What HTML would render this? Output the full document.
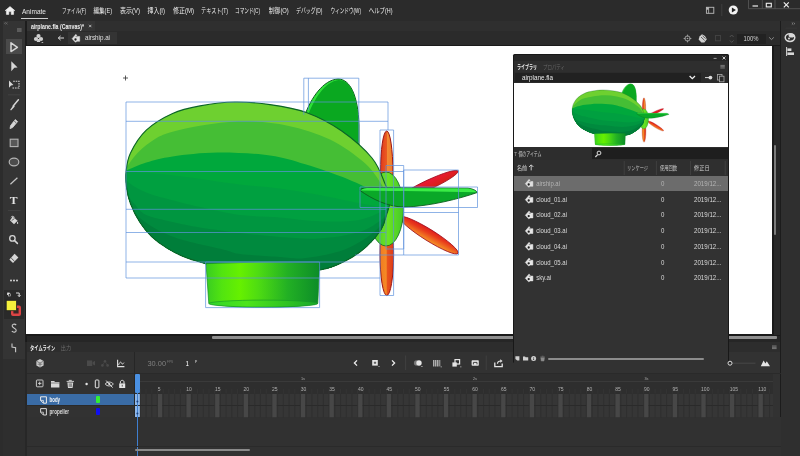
<!DOCTYPE html>
<html lang="ja"><head><meta charset="utf-8"><title>Animate</title>
<style>
html,body{margin:0;padding:0;background:#2c2c2c;overflow:hidden}
body{width:800px;height:456px;position:relative;font-family:"Liberation Sans",sans-serif}
.r{position:absolute}
</style></head><body>
<div class="r" style="left:0px;top:0px;width:800px;height:20.5px;background:#2b2b2b;"></div>
<div class="r" style="left:0px;top:20.5px;width:3px;height:436px;background:#2c2c2c;"></div>
<div class="r" style="left:3px;top:20.5px;width:21.5px;height:338.5px;background:#343434;"></div>
<div class="r" style="left:3px;top:359px;width:21.5px;height:97px;background:#2e2e2e;"></div>
<div class="r" style="left:24.5px;top:20.5px;width:2.5px;height:321px;background:#1d1d1d;"></div>
<div class="r" style="left:24.5px;top:341.5px;width:2.5px;height:115px;background:#272727;"></div>
<div class="r" style="left:27px;top:20.5px;width:753.5px;height:10.5px;background:#2f2f2f;"></div>
<div class="r" style="left:27px;top:21px;width:68px;height:10px;background:#353535;"></div>
<div class="r" style="left:27px;top:31px;width:753.5px;height:14px;background:#2b2b2b;"></div>
<div class="r" style="left:68px;top:32px;width:49px;height:11.5px;background:#343434;"></div>
<div class="r" style="left:25.5px;top:44.5px;width:755px;height:297.5px;background:#1a1a1a;"></div>
<div class="r" style="left:26.3px;top:45.8px;width:745.7px;height:288px;background:#ffffff;"></div>
<div class="r" style="left:773.6px;top:46px;width:6.9px;height:288.5px;background:#282828;"></div>
<div class="r" style="left:774px;top:144.5px;width:2.3px;height:90.8px;background:#7c7c7c;border-radius:1px"></div>
<div class="r" style="left:26.5px;top:335.5px;width:754px;height:6px;background:#262626;"></div>
<div class="r" style="left:212.2px;top:336.3px;width:565px;height:2.4px;background:#8e8e8e;border-radius:1px"></div>
<div class="r" style="left:27px;top:342px;width:753.5px;height:9.5px;background:#2d2d2d;"></div>
<div class="r" style="left:27px;top:351.5px;width:753.5px;height:104.5px;background:#323232;"></div>
<div class="r" style="left:780.5px;top:20.5px;width:19.5px;height:436px;background:#2f2f2f;"></div>
<div class="r" style="left:780px;top:20.5px;width:0.8px;height:436px;background:#1c1c1c;"></div>
<div class="r" style="left:21px;top:17.8px;width:26.5px;height:1.2px;background:#cfcfcf;"></div>
<div class="r" style="left:737px;top:34px;width:29px;height:9.6px;background:#222222;"></div>
<div class="r" style="left:6px;top:39.4px;width:15.6px;height:14.6px;background:#4a4a4a;"></div>
<div class="r" style="left:4px;top:289.5px;width:19.5px;height:29px;background:#2a2a2a;"></div>
<div class="r" style="left:27px;top:373px;width:753.5px;height:0.8px;background:#2a2a2a;"></div>
<div class="r" style="left:134px;top:352px;width:0.9px;height:104px;background:#262626;"></div>
<div class="r" style="left:27px;top:393.8px;width:107px;height:11.2px;background:#3a6ca6;"></div>
<div class="r" style="left:27px;top:405px;width:107px;height:0.6px;background:#2a2a2a;"></div>
<div class="r" style="left:27px;top:417.4px;width:753.5px;height:38.6px;background:#313131;"></div>
<div class="r" style="left:96px;top:396px;width:3.6px;height:6.6px;background:#33ee33;border-radius:1px"></div>
<div class="r" style="left:96px;top:408.3px;width:3.6px;height:6.4px;background:#1010f0;border-radius:1px"></div>
<div class="r" style="left:134.6px;top:373.8px;width:638px;height:19.8px;background:#2e2e2e;"></div>
<div class="r" style="left:134.6px;top:381px;width:638px;height:0.6px;background:#3a3a3a;"></div>
<div class="r" style="left:134.6px;top:393.8px;width:638px;height:23.6px;background:#363636;"></div>
<div class="r" style="left:134.6px;top:405.3px;width:638px;height:0.7px;background:#2a2a2a;"></div>
<div class="r" style="left:134.6px;top:374.4px;width:5.4px;height:18.6px;background:#4a90e2;border-radius:1px"></div>
<div class="r" style="left:136.9px;top:393px;width:0.9px;height:63px;background:#4a90e2;"></div>
<div class="r" style="left:134.8px;top:394px;width:5.2px;height:11px;background:#8fb8ea;"></div>
<div class="r" style="left:134.8px;top:406px;width:5.2px;height:11.2px;background:#8fb8ea;"></div>
<div class="r" style="left:136.9px;top:393px;width:0.9px;height:63px;background:#3f7fd0;"></div>
<div class="r" style="left:27px;top:446px;width:753.5px;height:0.6px;background:#2a2a2a;"></div>
<div class="r" style="left:135px;top:449.3px;width:115px;height:2px;background:#8a8a8a;border-radius:1px"></div>
<div class="r" style="left:512.9px;top:54.3px;width:216.20000000000002px;height:309px;background:#181818;border-radius:1.5px"></div>
<div class="r" style="left:513.6px;top:54.8px;width:214.8px;height:6.6px;background:#272727;border-radius:1.5px 1.5px 0 0"></div>
<div class="r" style="left:513.6px;top:61.4px;width:214.8px;height:10.6px;background:#2e2e2e;"></div>
<div class="r" style="left:513.6px;top:72px;width:214.8px;height:11px;background:#2b2b2b;"></div>
<div class="r" style="left:515px;top:72.8px;width:186px;height:9.4px;background:#212121;"></div>
<div class="r" style="left:513.6px;top:82.5px;width:214.8px;height:64.3px;background:#ffffff;"></div>
<div class="r" style="left:513.6px;top:146.8px;width:214.8px;height:13.6px;background:#2d2d2d;"></div>
<div class="r" style="left:592.4px;top:148.4px;width:136px;height:10.6px;background:#1e1e1e;"></div>
<div class="r" style="left:513.6px;top:160.4px;width:214.8px;height:15.2px;background:#2f2f2f;"></div>
<div class="r" style="left:513.6px;top:175.6px;width:214.8px;height:187px;background:#323232;"></div>
<div class="r" style="left:513.6px;top:175.6px;width:214.8px;height:15.2px;background:#6c6c6c;"></div>
<div class="r" style="left:547.6px;top:357.5px;width:156px;height:2px;background:#8c8c8c;border-radius:1px"></div>
<svg width="800" height="456" viewBox="0 0 800 456" style="position:absolute;left:0;top:0;will-change:transform">
<defs>
<clipPath id="bodyclip"><path d="M126.0,172.0C126.7,166.2 127.1,159.9 130.5,152.9C133.9,145.9 139.3,136.7 146.3,130.1C153.3,123.5 163.7,117.4 172.6,113.4C181.5,109.4 189.6,107.8 200.0,105.9C210.4,104.0 223.3,102.2 235.0,102.0C246.7,101.8 258.1,102.9 270.0,104.6C281.9,106.3 294.4,108.1 306.3,112.4C318.2,116.8 330.4,123.1 341.4,130.7C352.3,138.3 364.7,149.1 372.0,158.0C379.3,166.9 382.3,177.4 385.3,184.4C388.3,191.4 389.8,194.9 390.0,200.0C390.2,205.1 388.1,209.8 386.6,214.7C385.2,219.6 384.6,223.9 381.3,229.2C378.0,234.5 372.7,241.0 366.8,246.3C360.9,251.6 353.6,256.9 345.8,260.8C338.0,264.8 332.6,267.9 320.0,270.0C307.4,272.1 285.8,273.7 270.0,273.5C254.2,273.3 235.8,270.6 225.0,269.0C214.2,267.4 212.0,265.6 205.5,263.7C199.0,261.8 192.2,260.2 185.8,257.6C179.5,255.1 173.1,251.9 167.4,248.4C161.7,244.9 156.2,241.0 151.6,236.6C147.0,232.2 143.2,227.5 139.7,222.0C136.2,216.5 132.7,209.4 130.5,203.7C128.3,198.0 127.3,193.2 126.6,187.9C125.8,182.6 125.3,177.8 126.0,172.0Z"/></clipPath>
<linearGradient id="gond" x1="0" x2="1" y1="0" y2="0">
 <stop offset="0" stop-color="#38cc22"/><stop offset="0.14" stop-color="#52e410"/><stop offset="0.3" stop-color="#66f000"/><stop offset="0.46" stop-color="#4edc12"/><stop offset="0.72" stop-color="#22b024"/><stop offset="1" stop-color="#0c8c28"/>
</linearGradient>
<linearGradient id="gondb" x1="0" x2="1" y1="0" y2="0">
 <stop offset="0" stop-color="#30d42a"/><stop offset="0.35" stop-color="#4ee41a"/><stop offset="1" stop-color="#18a82a"/>
</linearGradient>
<linearGradient id="prop" x1="0" x2="1" y1="0" y2="0">
 <stop offset="0" stop-color="#e03a1c"/><stop offset="0.5" stop-color="#ea5a22"/><stop offset="0.55" stop-color="#f28a32"/><stop offset="1" stop-color="#ee7a2a"/>
</linearGradient>
<linearGradient id="prop2" x1="0" x2="1" y1="0" y2="0">
 <stop offset="0" stop-color="#f07a20"/><stop offset="0.45" stop-color="#f58a26"/><stop offset="0.55" stop-color="#e8521c"/><stop offset="1" stop-color="#dc3a1a"/>
</linearGradient>
<linearGradient id="blade" x1="0" x2="0.25" y1="0" y2="1">
 <stop offset="0" stop-color="#ee1838"/><stop offset="1" stop-color="#d8201a"/>
</linearGradient>
<linearGradient id="blade2" x1="0" x2="0.3" y1="0" y2="1">
 <stop offset="0" stop-color="#dc141c"/><stop offset="0.45" stop-color="#e83a1c"/><stop offset="1" stop-color="#f48a26"/>
</linearGradient>
<linearGradient id="cap" x1="0" x2="1" y1="0" y2="0">
 <stop offset="0" stop-color="#3cc030"/><stop offset="0.55" stop-color="#6ae422"/><stop offset="1" stop-color="#44c828"/>
</linearGradient>
<g id="ship">
 <!-- propeller -->
 <ellipse cx="386.7" cy="172.5" rx="6.2" ry="41.5" fill="url(#prop)" stroke="#9a1414" stroke-width="1"/><ellipse cx="386.8" cy="254" rx="6.8" ry="41.5" fill="url(#prop2)" stroke="#9a1414" stroke-width="1"/>
 <!-- blades -->
 <g transform="translate(429 184.6) rotate(-25)"><ellipse cx="0" cy="0" rx="32" ry="4.7" fill="url(#blade)" stroke="#a01020" stroke-width="0.8"/></g>
 <g transform="translate(429 235.2) rotate(32)"><ellipse cx="0" cy="0" rx="34.2" ry="5.7" fill="url(#blade2)" stroke="#a01020" stroke-width="0.8"/></g>
 <!-- tail cap -->
 <ellipse cx="386" cy="209" rx="17.5" ry="37" fill="url(#cap)" stroke="#0b6a24" stroke-width="0.8"/>
 <!-- top fin -->
 <path d="M304.5,116 C311,98 323,80 338,79 C350,79 358,95 359,125 L359,148 L304.5,148 Z" fill="#2ee038" stroke="#0b5d1e" stroke-width="1"/>
 <path d="M307.6,116 C314,99 325,81.5 338.6,80 C350,80 357.6,95 358.4,125 L358.4,148 L307.6,148 Z" fill="#0aa820"/>
 <!-- body -->
 <path d="M126.0,172.0C126.7,166.2 127.1,159.9 130.5,152.9C133.9,145.9 139.3,136.7 146.3,130.1C153.3,123.5 163.7,117.4 172.6,113.4C181.5,109.4 189.6,107.8 200.0,105.9C210.4,104.0 223.3,102.2 235.0,102.0C246.7,101.8 258.1,102.9 270.0,104.6C281.9,106.3 294.4,108.1 306.3,112.4C318.2,116.8 330.4,123.1 341.4,130.7C352.3,138.3 364.7,149.1 372.0,158.0C379.3,166.9 382.3,177.4 385.3,184.4C388.3,191.4 389.8,194.9 390.0,200.0C390.2,205.1 388.1,209.8 386.6,214.7C385.2,219.6 384.6,223.9 381.3,229.2C378.0,234.5 372.7,241.0 366.8,246.3C360.9,251.6 353.6,256.9 345.8,260.8C338.0,264.8 332.6,267.9 320.0,270.0C307.4,272.1 285.8,273.7 270.0,273.5C254.2,273.3 235.8,270.6 225.0,269.0C214.2,267.4 212.0,265.6 205.5,263.7C199.0,261.8 192.2,260.2 185.8,257.6C179.5,255.1 173.1,251.9 167.4,248.4C161.7,244.9 156.2,241.0 151.6,236.6C147.0,232.2 143.2,227.5 139.7,222.0C136.2,216.5 132.7,209.4 130.5,203.7C128.3,198.0 127.3,193.2 126.6,187.9C125.8,182.6 125.3,177.8 126.0,172.0Z" fill="#6ed030"/>
 <g clip-path="url(#bodyclip)">
  <path d="M124.0,171.0C126.2,168.0 132.3,158.2 137.5,152.9C142.7,147.6 149.2,142.4 155.0,138.9C160.8,135.4 165.1,134.0 172.6,131.8C180.1,129.6 188.1,127.5 200.0,125.7C211.9,124.0 229.3,121.3 243.9,121.3C258.5,121.3 273.3,122.7 287.7,125.7C302.1,128.8 317.1,133.3 330.0,139.6C342.9,145.9 356.2,155.6 365.0,163.3C373.8,171.0 378.4,179.9 382.6,186.0C386.8,192.1 388.8,197.7 390.0,200.0L400,300L100,300Z" fill="#45be35"/>
  <path d="M124.0,171.5C127.7,170.0 138.2,165.0 146.3,162.5C154.4,160.0 160.7,158.1 172.6,156.4C184.5,154.7 201.3,152.7 217.5,152.5C233.7,152.3 255.4,153.5 270.0,155.5C284.6,157.5 292.4,160.4 305.3,164.3C318.2,168.2 335.4,174.1 347.5,179.0C359.6,183.9 370.9,190.0 378.0,194.0C385.1,198.0 388.0,201.5 390.0,203.0L400,300L100,300Z" fill="#00a83c"/>
  <path d="M124.0,171.5C132.1,172.1 153.3,173.1 172.6,175.3C191.9,177.5 222.1,182.3 240.0,184.5C257.9,186.7 266.8,186.7 280.0,188.4C293.2,190.2 306.3,192.6 319.5,195.0C332.7,197.4 348.1,201.0 359.0,203.0C369.9,205.0 379.8,206.7 385.0,207.0C390.2,207.3 389.2,205.3 390.0,205.0L400,300L100,300Z" fill="#00a040"/>
  <path d="M124.0,172.0C124.7,173.7 124.3,178.6 128.0,182.0C131.7,185.4 138.9,189.3 146.3,192.4C153.7,195.5 163.8,197.9 172.6,200.3C181.4,202.7 187.8,204.4 199.0,206.8C210.2,209.2 226.5,213.2 240.0,215.0C253.5,216.8 266.8,216.3 280.0,217.4C293.2,218.5 306.3,220.9 319.5,221.3C332.7,221.7 348.1,222.0 359.0,220.0C369.9,218.0 379.8,212.0 385.0,209.5C390.2,207.0 389.2,205.8 390.0,205.0L400,300L100,300Z" fill="#009640"/>
  <path d="M124.0,175.0C124.4,177.9 124.6,187.3 126.6,192.4C128.6,197.5 132.5,201.7 135.8,205.5C139.1,209.3 140.2,212.2 146.3,215.0C152.4,217.8 163.7,219.9 172.6,222.0C181.5,224.1 188.8,225.7 200.0,227.5C211.2,229.3 226.7,231.4 240.0,233.0C253.3,234.6 266.8,236.1 280.0,237.0C293.2,237.9 306.3,239.2 319.5,238.4C332.7,237.6 348.5,235.3 359.0,232.0C369.5,228.7 377.8,222.7 382.6,218.7C387.4,214.7 387.1,209.8 388.0,208.0L400,300L100,300Z" fill="#008a3e"/>
  <path d="M124.0,185.0C125.0,188.3 126.5,198.8 130.0,205.0C133.5,211.2 137.5,216.6 145.0,222.0C152.5,227.4 161.7,232.8 175.0,237.5C188.3,242.2 214.2,247.2 225.0,250.0C235.8,252.8 230.8,252.8 240.0,254.0C249.2,255.2 269.0,256.3 280.0,257.0C291.0,257.7 295.0,259.3 306.0,258.0C317.0,256.7 334.1,253.8 346.0,249.0C357.9,244.2 370.4,235.5 377.4,229.0C384.4,222.5 386.2,213.2 388.0,210.0L400,300L100,300Z" fill="#007e3a"/>
 </g>
 <path d="M126.0,172.0C126.7,166.2 127.1,159.9 130.5,152.9C133.9,145.9 139.3,136.7 146.3,130.1C153.3,123.5 163.7,117.4 172.6,113.4C181.5,109.4 189.6,107.8 200.0,105.9C210.4,104.0 223.3,102.2 235.0,102.0C246.7,101.8 258.1,102.9 270.0,104.6C281.9,106.3 294.4,108.1 306.3,112.4C318.2,116.8 330.4,123.1 341.4,130.7C352.3,138.3 364.7,149.1 372.0,158.0C379.3,166.9 382.3,177.4 385.3,184.4C388.3,191.4 389.8,194.9 390.0,200.0C390.2,205.1 388.1,209.8 386.6,214.7C385.2,219.6 384.6,223.9 381.3,229.2C378.0,234.5 372.7,241.0 366.8,246.3C360.9,251.6 353.6,256.9 345.8,260.8C338.0,264.8 332.6,267.9 320.0,270.0C307.4,272.1 285.8,273.7 270.0,273.5C254.2,273.3 235.8,270.6 225.0,269.0C214.2,267.4 212.0,265.6 205.5,263.7C199.0,261.8 192.2,260.2 185.8,257.6C179.5,255.1 173.1,251.9 167.4,248.4C161.7,244.9 156.2,241.0 151.6,236.6C147.0,232.2 143.2,227.5 139.7,222.0C136.2,216.5 132.7,209.4 130.5,203.7C128.3,198.0 127.3,193.2 126.6,187.9C125.8,182.6 125.3,177.8 126.0,172.0Z" fill="none" stroke="#0b6428" stroke-width="1.1"/>
 <!-- gondola -->
 <path d="M206,263.6 Q263,260.6 319.6,263 L317.8,303.4 C300,308.6 226,308.6 208.8,303.4 Z" fill="url(#gond)" stroke="#118a26" stroke-width="0.7"/>
 <ellipse cx="263.3" cy="303.6" rx="54.5" ry="3.5" fill="url(#gondb)" stroke="#149428" stroke-width="0.6"/>
 <!-- horizontal fin -->
 <path d="M360,190.5 C361,188.5 364,187.5 370,187.5 L468,188.2 C474,189 477,191 477,192.6 C460,198.5 430,206.5 404,207 C388,207 372,199 360,190.5 Z" fill="#0aa828" stroke="#0b5d1e" stroke-width="0.9"/>
 <path d="M360.6,190.4 C362.5,188.4 366,188 370,188 L468,188.6 C473,189.4 476,191 476.3,192.2 C440,191.2 400,191.2 360.6,190.4 Z" fill="#3aec46"/>
</g>
</defs>
<use href="#ship"/>
<use href="#ship" transform="translate(537.65 62.46) scale(0.275 0.27)"/>
<path d="M123,78H128M125.5,75.5V80.5" stroke="#333" stroke-width="0.8" fill="none"/>
<path d="M388,130V102H126V278H380M126,121.3H388M126,171.5H403.7M126,209.3H386M126,232.5H386M126,262H380M303.8,115V78.2H358.8V143M308.4,78.2V110M380,130H393.6V295.5H380ZM360,187H477.5V207.5H360ZM403.7,170H458.5V255H403.7ZM403.7,212.5H458.5M386,165.5H403.7V249H386ZM355,255H403.7M205.6,262H319.6V307.6H205.6Z" fill="none" stroke="#5f92dc" stroke-width="0.7"/>
<path d="M748.5,0V8.7H800M762.3,0V8.7M775,0V8.7" fill="none" stroke="#5a5a5a" stroke-width="0.8"/>
<path d="M752.5,6H758" stroke="#eee" stroke-width="1.2"/>
<rect x="766.3" y="3.3" width="5" height="3.6" fill="none" stroke="#eee" stroke-width="1.1"/>
<path d="M783.8,2.3L788.8,7.3M788.8,2.3L783.8,7.3" stroke="#eee" stroke-width="1.2"/>
<rect x="706.4" y="7.3" width="7.4" height="6" fill="none" stroke="#bbb" stroke-width="0.9"/><path d="M708.6,7.3V13.3" stroke="#bbb" stroke-width="0.8"/><rect x="706.4" y="7.3" width="2.2" height="2.4" fill="#bbb"/>
<path d="M721.8,4V16" stroke="#444" stroke-width="0.8"/>
<circle cx="733.3" cy="10" r="4.6" fill="#f2f2f2"/><path d="M731.9,7.6V12.4L735.9,10Z" fill="#222"/>
<path d="M5.2,10.6L10,6.6L14.8,10.6L13.6,10.6V14.4H11.2V11.6H8.8V14.4H6.4V10.6Z" fill="#f0f0f0" stroke="#f0f0f0" stroke-width="0.6" stroke-linejoin="round"/>
<text x="22" y="13.6" font-family="Liberation Sans" font-size="7.6" font-weight="normal" fill="#e8e8e8" textLength="24.0" lengthAdjust="spacingAndGlyphs" >Animate</text>
<text x="62" y="13.3" font-family="'Liberation Sans','Noto Sans CJK JP',sans-serif" font-size="7" fill="#ececec" textLength="24" lengthAdjust="spacingAndGlyphs">ファイル(F)</text>
<text x="93.5" y="13.3" font-family="'Liberation Sans','Noto Sans CJK JP',sans-serif" font-size="7" fill="#ececec" textLength="18.5" lengthAdjust="spacingAndGlyphs">編集(E)</text>
<text x="120" y="13.3" font-family="'Liberation Sans','Noto Sans CJK JP',sans-serif" font-size="7" fill="#ececec" textLength="20" lengthAdjust="spacingAndGlyphs">表示(V)</text>
<text x="147.5" y="13.3" font-family="'Liberation Sans','Noto Sans CJK JP',sans-serif" font-size="7" fill="#ececec" textLength="17.5" lengthAdjust="spacingAndGlyphs">挿入(I)</text>
<text x="173" y="13.3" font-family="'Liberation Sans','Noto Sans CJK JP',sans-serif" font-size="7" fill="#ececec" textLength="21" lengthAdjust="spacingAndGlyphs">修正(M)</text>
<text x="201" y="13.3" font-family="'Liberation Sans','Noto Sans CJK JP',sans-serif" font-size="7" fill="#ececec" textLength="27" lengthAdjust="spacingAndGlyphs">テキスト(T)</text>
<text x="235" y="13.3" font-family="'Liberation Sans','Noto Sans CJK JP',sans-serif" font-size="7" fill="#ececec" textLength="25" lengthAdjust="spacingAndGlyphs">コマンド(C)</text>
<text x="268.8" y="13.3" font-family="'Liberation Sans','Noto Sans CJK JP',sans-serif" font-size="7" fill="#ececec" textLength="20" lengthAdjust="spacingAndGlyphs">制御(O)</text>
<text x="296" y="13.3" font-family="'Liberation Sans','Noto Sans CJK JP',sans-serif" font-size="7" fill="#ececec" textLength="26.5" lengthAdjust="spacingAndGlyphs">デバッグ(D)</text>
<text x="330.5" y="13.3" font-family="'Liberation Sans','Noto Sans CJK JP',sans-serif" font-size="7" fill="#ececec" textLength="30.5" lengthAdjust="spacingAndGlyphs">ウィンドウ(W)</text>
<text x="368.8" y="13.3" font-family="'Liberation Sans','Noto Sans CJK JP',sans-serif" font-size="7" fill="#ececec" textLength="23.7" lengthAdjust="spacingAndGlyphs">ヘルプ(H)</text>
<text x="31" y="28.6" font-family="Liberation Sans" font-size="6.6" font-weight="bold" fill="#f0f0f0" textLength="53.0" lengthAdjust="spacingAndGlyphs" >airplane.fla (Canvas)*</text>
<path d="M89,24.8L91.4,27.2M91.4,24.8L89,27.2" stroke="#ccc" stroke-width="0.8"/>
<g fill="#cfcfcf"><circle cx="38.5" cy="36" r="2.1"/><circle cx="36" cy="39" r="2.1"/><circle cx="41" cy="39" r="2.1"/><path d="M37.6,39H39.4L40.3,42H36.7Z"/><rect x="41.6" y="42" width="1.6" height="0.8"/></g>
<path d="M58.3,38H64M58.3,38L60.6,35.9M58.3,38L60.6,40.1" stroke="#ddd" stroke-width="1" fill="none"/>
<g transform="translate(72 34) scale(1)"><path d="M0.1,4.7L3.9,0.3L5.3,2.5H7.7V7.3H5.2L3.4,8.2Z" fill="#e0e0e0" stroke="#e0e0e0" stroke-width="0.5" stroke-linejoin="round"/><circle cx="3.5" cy="5.5" r="1.15" fill="#222"/><path d="M3.6,2.6L5.4,2.7" stroke="#333" stroke-width="0.5"/></g>
<text x="85" y="40.4" font-family="Liberation Sans" font-size="7.4" font-weight="normal" fill="#e0e0e0" textLength="25.0" lengthAdjust="spacingAndGlyphs" >airship.ai</text>
<circle cx="687.5" cy="38.5" r="2.6" fill="none" stroke="#aaa" stroke-width="0.9"/><path d="M687.5,34.6V36.6M687.5,40.4V42.4M683.6,38.5H685.6M689.4,38.5H691.4" stroke="#aaa" stroke-width="0.8"/><circle cx="687.5" cy="38.5" r="0.8" fill="#aaa"/>
<g fill="#d0d0d0"><path d="M699.5,36.5L702,34.2L705,36L706.8,39.2L704.4,42.6L701.4,42.4L698.6,39.4Z"/></g><path d="M701,37L704.6,40.4M702.6,35.8L705.6,38.6" stroke="#2b2b2b" stroke-width="0.7"/>
<rect x="715.4" y="35.6" width="5.2" height="5.2" fill="none" stroke="#454545" stroke-width="0.9"/>
<path d="M729.8,37L731.7,35L733.6,37M729.8,40.4L731.7,42.4L733.6,40.4" fill="none" stroke="#555" stroke-width="0.9"/>
<text x="743.5" y="41.4" font-family="Liberation Sans" font-size="6.8" font-weight="normal" fill="#d0d0d0" textLength="15.0" lengthAdjust="spacingAndGlyphs" >100%</text>
<path d="M769.2,37.4L771.5,39.6L773.8,37.4" fill="none" stroke="#999" stroke-width="0.9"/>
<path d="M791.8,22.6L793,23.6L791.8,24.6M793.6,22.6L794.8,23.6L793.6,24.6" fill="none" stroke="#aaa" stroke-width="0.6"/>
<path d="M785.5,28.2H797" stroke="#3c3c3c" stroke-width="0.6"/>
<ellipse cx="790" cy="37.6" rx="4.8" ry="3.8" fill="none" stroke="#d8d8d8" stroke-width="1.5"/><ellipse cx="791.6" cy="35.4" rx="3" ry="2" fill="#d8d8d8"/><circle cx="789" cy="38.6" r="1" fill="#d8d8d8"/>
<path d="M786.6,47V56" stroke="#d8d8d8" stroke-width="1"/><rect x="787.4" y="48.4" width="4" height="2.6" fill="#d8d8d8"/><rect x="787.4" y="52.4" width="6.6" height="2.6" fill="#d8d8d8"/>
<path d="M5.6,22.4L4.6,23.3L5.6,24.2M7.4,22.4L6.4,23.3L7.4,24.2" fill="none" stroke="#999" stroke-width="0.6"/>
<path d="M17,28.8H21.6M17,30H21.6M17,31.2H21.6" stroke="#888" stroke-width="0.7"/>
<path d="M11,42.8V51.6L17.4,47.4Z" fill="none" stroke="#d6d6d6" stroke-width="1.5" stroke-linejoin="round"/>
<path d="M11.3,61.2L17.6,67.4L14.3,67.8L11.3,71.2Z" fill="#d6d6d6"/>
<path d="M9,80.6L13.4,85L11,85.4L9,87.8Z" fill="#d6d6d6"/><path d="M13.2,81.2H19V88H11.6" fill="none" stroke="#d6d6d6" stroke-width="1.1" stroke-dasharray="1.6 0.9"/>
<path d="M8,94.8H20.5M8,210.6H20.5" stroke="#484848" stroke-width="0.7"/>
<path d="M18.4,99.8L13.2,106" stroke="#d6d6d6" stroke-width="1.5" stroke-linecap="round"/><path d="M13.4,105.2L10.2,109.8L11,110.4L14.8,106.6Z" fill="#d6d6d6"/>
<path d="M15.2,119.6L17.6,121.6L12.6,127.6L10,128.6L10.6,125.6Z" fill="#d6d6d6" stroke="#d6d6d6" stroke-width="0.8" stroke-linejoin="round"/><path d="M14.2,121L16.2,122.8" stroke="#333" stroke-width="0.7"/>
<rect x="10.2" y="139.2" width="7.8" height="7.4" fill="#585858" stroke="#b4b4b4" stroke-width="1.1"/>
<ellipse cx="14" cy="162" rx="4.8" ry="3.9" fill="#4c4c4c" stroke="#b4b4b4" stroke-width="1.2"/>
<path d="M10.4,184.2L17.4,177.8" stroke="#c4c4c4" stroke-width="1.2"/>
<text x="9.8" y="204" font-family="Liberation Serif" font-size="10.5" font-weight="bold" fill="#e4e4e4" textLength="7.8" lengthAdjust="spacingAndGlyphs" >T</text>
<path d="M12.6,216.6L17.6,220.8L14,224.2L10,220.6Z" fill="#d6d6d6"/><path d="M11,217.2C11.6,216 13.4,216 14.6,217.4" fill="none" stroke="#d6d6d6" stroke-width="0.9"/><path d="M17.4,221.4C18.4,222.6 18.4,223.6 17.6,224C16.8,223.6 16.8,222.6 17.4,221.4Z" fill="#d6d6d6"/><path d="M11.6,220.6L14.4,218.6" stroke="#333" stroke-width="0.7"/>
<circle cx="12.4" cy="238.4" r="2.7" fill="none" stroke="#d6d6d6" stroke-width="1.3"/><path d="M14.6,240.6L17.4,243.4" stroke="#d6d6d6" stroke-width="1.5" stroke-linecap="round"/>
<path d="M14.6,253.8L18.4,257.4L13,263L9.4,259.4Z" fill="#d6d6d6"/><path d="M11.2,258L14.6,261.4" stroke="#333" stroke-width="0.8"/>
<circle cx="11" cy="280.6" r="1" fill="#d6d6d6"/><circle cx="14" cy="280.6" r="1" fill="#d6d6d6"/><circle cx="17" cy="280.6" r="1" fill="#d6d6d6"/>
<rect x="7.2" y="292.6" width="2.4" height="2.4" fill="#eee"/><rect x="8.4" y="293.8" width="2.2" height="2.2" fill="#222" stroke="#eee" stroke-width="0.5"/>
<path d="M16,293H19.2V296.4M19.2,296.6L17.9,295.2M19.2,296.6L20.5,295.2" fill="none" stroke="#eee" stroke-width="0.9"/>
<rect x="12.2" y="306.8" width="7.6" height="8" fill="#3a2626" stroke="#dc4444" stroke-width="2.4" rx="0.8"/>
<rect x="6.2" y="300.3" width="10.4" height="10.4" fill="#f4f03c" stroke="#222" stroke-width="0.8"/>
<path d="M16.2,325C14.6,323.4 11.8,324.2 12.2,326.2C12.6,328.2 16.2,328.2 16.2,330.2C16.2,332.4 13.4,332.8 11.8,331.2" fill="none" stroke="#c8c8c8" stroke-width="1.1"/>
<path d="M12,343.4V347L15.6,347.6V352.2" fill="none" stroke="#c8c8c8" stroke-width="1.1"/>
<text x="30" y="350" font-family="'Liberation Sans','Noto Sans CJK JP',sans-serif" font-size="6" font-weight="bold" fill="#f2f2f2" textLength="25.2" lengthAdjust="spacingAndGlyphs">タイムライン</text>
<text x="60.8" y="350" font-family="'Liberation Sans','Noto Sans CJK JP',sans-serif" font-size="5.8" fill="#6a6a6a" textLength="10.2" lengthAdjust="spacingAndGlyphs">出力</text>
<path d="M772,346H776.6M772,347.3H776.6M772,348.6H776.6" stroke="#999" stroke-width="0.7"/>
<path d="M40,359L43.6,361V365.6L40,367.6L36.4,365.6V361Z" fill="#cfcfcf"/><path d="M36.8,361.4L40,363L43.2,361.4M40,363V367" stroke="#444" stroke-width="0.6" fill="none"/><path d="M37.6,364.2H42.4" stroke="#666" stroke-width="0.8"/>
<rect x="87" y="360.4" width="5.2" height="5.6" fill="#4a4a4a"/><path d="M92.6,362.2L95,360.8V365.6L92.6,364.2Z" fill="#4a4a4a"/>
<g fill="#4a4a4a"><circle cx="105" cy="361.2" r="1.3"/><circle cx="102.4" cy="365.4" r="1.3"/><circle cx="107.6" cy="365.4" r="1.3"/></g><path d="M105,361.2L102.4,365.4M105,361.2L107.6,365.4" stroke="#4a4a4a" stroke-width="0.6"/>
<path d="M117.6,359.8V366.6H124.4" fill="none" stroke="#e0e0e0" stroke-width="1.1"/><path d="M118.6,365C119.6,361.6 121,361.6 121.6,363.2C122.2,364.6 123,364.2 124,362.6" fill="none" stroke="#e0e0e0" stroke-width="0.9"/>
<text x="147.5" y="366.2" font-family="Liberation Sans" font-size="7.8" font-weight="normal" fill="#808080" textLength="18.5" lengthAdjust="spacingAndGlyphs" >30.00</text>
<text x="167" y="362.6" font-family="Liberation Sans" font-size="3.2" font-weight="normal" fill="#7a7a7a" textLength="6.0" lengthAdjust="spacingAndGlyphs" >FPS</text>
<text x="186" y="366.4" font-family="Liberation Sans" font-size="7.4" font-weight="bold" fill="#f0f0f0" textLength="2.6" lengthAdjust="spacingAndGlyphs" >1</text>
<text x="195" y="362.8" font-family="Liberation Sans" font-size="4" font-weight="bold" fill="#bbb" textLength="2.2" lengthAdjust="spacingAndGlyphs" >F</text>
<path d="M357,360.4L354.4,363L357,365.6" fill="none" stroke="#eee" stroke-width="1.3"/>
<rect x="372.2" y="360" width="5.6" height="5.6" fill="#e4e4e4"/><path d="M373.8,362.8H376.2M375,361.6V364" stroke="#333" stroke-width="0.8"/><path d="M378.4,366.2H379.6V367H378.4Z" fill="#ccc"/>
<path d="M392,360.4L394.6,363L392,365.6" fill="none" stroke="#eee" stroke-width="1.3"/>
<path d="M405.6,355.5V370M486.2,355.5V370" stroke="#444" stroke-width="0.8"/>
<circle cx="416.6" cy="363" r="2.7" fill="#777"/><circle cx="419" cy="363" r="2.7" fill="#e6e6e6"/><path d="M421.2,366.2H422.6V367H421.2Z" fill="#ccc"/>
<path d="M433.8,360V366.4M435.8,360V366.4M437.8,360V366.4" stroke="#d8d8d8" stroke-width="1.1"/><rect x="438.8" y="360" width="1.6" height="6.4" fill="#8a8a8a"/><path d="M440.6,366.4H441.8V367.2H440.6Z" fill="#ccc"/>
<rect x="455" y="359.6" width="4.6" height="4.4" fill="none" stroke="#e4e4e4" stroke-width="1.2"/><rect x="452.4" y="362.4" width="4.4" height="4.2" fill="#e4e4e4"/><path d="M460.2,366.4H461.4V367.2H460.2Z" fill="#ccc"/>
<rect x="471.6" y="360.2" width="7.2" height="5.6" fill="#e4e4e4" rx="0.8"/><path d="M473.4,364.4V362.4H477V364.4" fill="none" stroke="#333" stroke-width="0.9"/>
<path d="M494.8,362.4V366.6H502.2V363.6" fill="none" stroke="#e4e4e4" stroke-width="1.3"/><path d="M497.4,363.8C497.6,361.8 498.8,361 500.6,361" fill="none" stroke="#e4e4e4" stroke-width="1.1"/><path d="M500.2,359.2L502.6,361L500.2,362.8Z" fill="#e4e4e4"/>
<path d="M732,363.2H755.5" stroke="#4a4a4a" stroke-width="0.9"/><circle cx="730" cy="363.2" r="2" fill="#2a2a2a" stroke="#ddd" stroke-width="1"/>
<path d="M760.8,366.2L763.6,360.6L765.4,363.6L766.8,361.2L770,366.2Z" fill="#e4e4e4"/>
<rect x="36.4" y="380" width="6.6" height="6.8" fill="none" stroke="#d8d8d8" stroke-width="0.9" rx="0.8"/><path d="M38,383.4H41.4M39.7,381.7V385.1" stroke="#d8d8d8" stroke-width="0.9"/>
<path d="M51,381H54.2L55,382H59.4V387.4H51Z" fill="#d8d8d8"/><path d="M51,383H59.4" stroke="#333" stroke-width="0.5"/>
<path d="M66.6,381.4H74M68.8,380.4H71.8" stroke="#d8d8d8" stroke-width="0.9"/><path d="M67.4,382.4H73.2L72.6,388H68Z" fill="#d8d8d8"/><path d="M69.2,383.4V387M70.3,383.4V387M71.4,383.4V387" stroke="#333" stroke-width="0.5"/>
<circle cx="86.6" cy="384" r="1.2" fill="#e4e4e4"/>
<rect x="95.3" y="380" width="3.6" height="7.8" rx="0.8" fill="none" stroke="#e4e4e4" stroke-width="1"/>
<path d="M105.2,384C107,381.4 111.4,381.4 113.4,384C111.4,386.6 107,386.6 105.2,384Z" fill="none" stroke="#e4e4e4" stroke-width="0.9"/><circle cx="109.3" cy="384" r="1.1" fill="#e4e4e4"/><path d="M106.2,380.6L112.6,387.6" stroke="#e4e4e4" stroke-width="1"/>
<rect x="119.2" y="383.4" width="6" height="4.6" fill="#e4e4e4"/><path d="M120.4,383.4V382C120.4,379.8 124,379.8 124,382V383.4" fill="none" stroke="#e4e4e4" stroke-width="1"/><rect x="121.8" y="384.8" width="0.8" height="1.8" fill="#333"/>
<path d="M40.6,396.8H46.400000000000006V403.2H43.400000000000006L40.6,400.40000000000003Z" fill="none" stroke="#ececec" stroke-width="1" stroke-linejoin="round"/><path d="M40.6,400.40000000000003H43.400000000000006V403.2" fill="none" stroke="#ececec" stroke-width="0.8"/>
<path d="M40.6,408.6H46.400000000000006V415.0H43.400000000000006L40.6,412.20000000000005Z" fill="none" stroke="#d8d8d8" stroke-width="1" stroke-linejoin="round"/><path d="M40.6,412.20000000000005H43.400000000000006V415.0" fill="none" stroke="#d8d8d8" stroke-width="0.8"/>
<text x="49.6" y="402" font-family="Liberation Sans" font-size="6.6" font-weight="bold" fill="#f6f6f6" textLength="10.4" lengthAdjust="spacingAndGlyphs" >body</text>
<text x="49.6" y="414" font-family="Liberation Sans" font-size="6.6" font-weight="bold" fill="#dcdcdc" textLength="19.4" lengthAdjust="spacingAndGlyphs" >propeller</text>
<rect x="157.38" y="394" width="4.82" height="23.2" fill="#474747"/><rect x="185.98" y="394" width="4.82" height="23.2" fill="#474747"/><rect x="214.58" y="394" width="4.82" height="23.2" fill="#474747"/><rect x="243.18" y="394" width="4.82" height="23.2" fill="#474747"/><rect x="271.78" y="394" width="4.82" height="23.2" fill="#474747"/><rect x="300.38" y="394" width="4.82" height="23.2" fill="#474747"/><rect x="328.98" y="394" width="4.82" height="23.2" fill="#474747"/><rect x="357.58" y="394" width="4.82" height="23.2" fill="#474747"/><rect x="386.18" y="394" width="4.82" height="23.2" fill="#474747"/><rect x="414.78" y="394" width="4.82" height="23.2" fill="#474747"/><rect x="443.38" y="394" width="4.82" height="23.2" fill="#474747"/><rect x="471.98" y="394" width="4.82" height="23.2" fill="#474747"/><rect x="500.58" y="394" width="4.82" height="23.2" fill="#474747"/><rect x="529.18" y="394" width="4.82" height="23.2" fill="#474747"/><rect x="557.78" y="394" width="4.82" height="23.2" fill="#474747"/><rect x="586.38" y="394" width="4.82" height="23.2" fill="#474747"/><rect x="614.98" y="394" width="4.82" height="23.2" fill="#474747"/><rect x="643.58" y="394" width="4.82" height="23.2" fill="#474747"/><rect x="672.18" y="394" width="4.82" height="23.2" fill="#474747"/><rect x="700.78" y="394" width="4.82" height="23.2" fill="#474747"/><rect x="729.38" y="394" width="4.82" height="23.2" fill="#474747"/><rect x="757.98" y="394" width="4.82" height="23.2" fill="#474747"/><path d="M140.32,394V417.2M146.04,394V417.2M151.76,394V417.2M157.48,394V417.2M163.20,394V417.2M168.92,394V417.2M174.64,394V417.2M180.36,394V417.2M186.08,394V417.2M191.80,394V417.2M197.52,394V417.2M203.24,394V417.2M208.96,394V417.2M214.68,394V417.2M220.40,394V417.2M226.12,394V417.2M231.84,394V417.2M237.56,394V417.2M243.28,394V417.2M249.00,394V417.2M254.72,394V417.2M260.44,394V417.2M266.16,394V417.2M271.88,394V417.2M277.60,394V417.2M283.32,394V417.2M289.04,394V417.2M294.76,394V417.2M300.48,394V417.2M306.20,394V417.2M311.92,394V417.2M317.64,394V417.2M323.36,394V417.2M329.08,394V417.2M334.80,394V417.2M340.52,394V417.2M346.24,394V417.2M351.96,394V417.2M357.68,394V417.2M363.40,394V417.2M369.12,394V417.2M374.84,394V417.2M380.56,394V417.2M386.28,394V417.2M392.00,394V417.2M397.72,394V417.2M403.44,394V417.2M409.16,394V417.2M414.88,394V417.2M420.60,394V417.2M426.32,394V417.2M432.04,394V417.2M437.76,394V417.2M443.48,394V417.2M449.20,394V417.2M454.92,394V417.2M460.64,394V417.2M466.36,394V417.2M472.08,394V417.2M477.80,394V417.2M483.52,394V417.2M489.24,394V417.2M494.96,394V417.2M500.68,394V417.2M506.40,394V417.2M512.12,394V417.2M517.84,394V417.2M523.56,394V417.2M529.28,394V417.2M535.00,394V417.2M540.72,394V417.2M546.44,394V417.2M552.16,394V417.2M557.88,394V417.2M563.60,394V417.2M569.32,394V417.2M575.04,394V417.2M580.76,394V417.2M586.48,394V417.2M592.20,394V417.2M597.92,394V417.2M603.64,394V417.2M609.36,394V417.2M615.08,394V417.2M620.80,394V417.2M626.52,394V417.2M632.24,394V417.2M637.96,394V417.2M643.68,394V417.2M649.40,394V417.2M655.12,394V417.2M660.84,394V417.2M666.56,394V417.2M672.28,394V417.2M678.00,394V417.2M683.72,394V417.2M689.44,394V417.2M695.16,394V417.2M700.88,394V417.2M706.60,394V417.2M712.32,394V417.2M718.04,394V417.2M723.76,394V417.2M729.48,394V417.2M735.20,394V417.2M740.92,394V417.2M746.64,394V417.2M752.36,394V417.2M758.08,394V417.2M763.80,394V417.2M769.52,394V417.2" stroke="#2c2c2c" stroke-width="0.7"/><path d="M140.32,389V393.6M146.04,389V393.6M151.76,389V393.6M157.48,389V393.6M163.20,389V393.6M168.92,389V393.6M174.64,389V393.6M180.36,389V393.6M186.08,389V393.6M191.80,389V393.6M197.52,389V393.6M203.24,389V393.6M208.96,389V393.6M214.68,389V393.6M220.40,389V393.6M226.12,389V393.6M231.84,389V393.6M237.56,389V393.6M243.28,389V393.6M249.00,389V393.6M254.72,389V393.6M260.44,389V393.6M266.16,389V393.6M271.88,389V393.6M277.60,389V393.6M283.32,389V393.6M289.04,389V393.6M294.76,389V393.6M300.48,389V393.6M306.20,389V393.6M311.92,389V393.6M317.64,389V393.6M323.36,389V393.6M329.08,389V393.6M334.80,389V393.6M340.52,389V393.6M346.24,389V393.6M351.96,389V393.6M357.68,389V393.6M363.40,389V393.6M369.12,389V393.6M374.84,389V393.6M380.56,389V393.6M386.28,389V393.6M392.00,389V393.6M397.72,389V393.6M403.44,389V393.6M409.16,389V393.6M414.88,389V393.6M420.60,389V393.6M426.32,389V393.6M432.04,389V393.6M437.76,389V393.6M443.48,389V393.6M449.20,389V393.6M454.92,389V393.6M460.64,389V393.6M466.36,389V393.6M472.08,389V393.6M477.80,389V393.6M483.52,389V393.6M489.24,389V393.6M494.96,389V393.6M500.68,389V393.6M506.40,389V393.6M512.12,389V393.6M517.84,389V393.6M523.56,389V393.6M529.28,389V393.6M535.00,389V393.6M540.72,389V393.6M546.44,389V393.6M552.16,389V393.6M557.88,389V393.6M563.60,389V393.6M569.32,389V393.6M575.04,389V393.6M580.76,389V393.6M586.48,389V393.6M592.20,389V393.6M597.92,389V393.6M603.64,389V393.6M609.36,389V393.6M615.08,389V393.6M620.80,389V393.6M626.52,389V393.6M632.24,389V393.6M637.96,389V393.6M643.68,389V393.6M649.40,389V393.6M655.12,389V393.6M660.84,389V393.6M666.56,389V393.6M672.28,389V393.6M678.00,389V393.6M683.72,389V393.6M689.44,389V393.6M695.16,389V393.6M700.88,389V393.6M706.60,389V393.6M712.32,389V393.6M718.04,389V393.6M723.76,389V393.6M729.48,389V393.6M735.20,389V393.6M740.92,389V393.6M746.64,389V393.6M752.36,389V393.6M758.08,389V393.6M763.80,389V393.6M769.52,389V393.6" stroke="#3a3a3a" stroke-width="0.5"/>
<text x="157.7" y="390.8" font-family="Liberation Sans" font-size="5" font-weight="normal" fill="#b0b0b0"  >5</text>
<text x="186.3" y="390.8" font-family="Liberation Sans" font-size="5" font-weight="normal" fill="#b0b0b0"  >10</text>
<text x="214.9" y="390.8" font-family="Liberation Sans" font-size="5" font-weight="normal" fill="#b0b0b0"  >15</text>
<text x="243.5" y="390.8" font-family="Liberation Sans" font-size="5" font-weight="normal" fill="#b0b0b0"  >20</text>
<text x="272.1" y="390.8" font-family="Liberation Sans" font-size="5" font-weight="normal" fill="#b0b0b0"  >25</text>
<text x="300.7" y="390.8" font-family="Liberation Sans" font-size="5" font-weight="normal" fill="#b0b0b0"  >30</text>
<text x="329.3" y="390.8" font-family="Liberation Sans" font-size="5" font-weight="normal" fill="#b0b0b0"  >35</text>
<text x="357.9" y="390.8" font-family="Liberation Sans" font-size="5" font-weight="normal" fill="#b0b0b0"  >40</text>
<text x="386.5" y="390.8" font-family="Liberation Sans" font-size="5" font-weight="normal" fill="#b0b0b0"  >45</text>
<text x="415.1" y="390.8" font-family="Liberation Sans" font-size="5" font-weight="normal" fill="#b0b0b0"  >50</text>
<text x="443.7" y="390.8" font-family="Liberation Sans" font-size="5" font-weight="normal" fill="#b0b0b0"  >55</text>
<text x="472.3" y="390.8" font-family="Liberation Sans" font-size="5" font-weight="normal" fill="#b0b0b0"  >60</text>
<text x="500.9" y="390.8" font-family="Liberation Sans" font-size="5" font-weight="normal" fill="#b0b0b0"  >65</text>
<text x="529.5" y="390.8" font-family="Liberation Sans" font-size="5" font-weight="normal" fill="#b0b0b0"  >70</text>
<text x="558.1" y="390.8" font-family="Liberation Sans" font-size="5" font-weight="normal" fill="#b0b0b0"  >75</text>
<text x="586.7" y="390.8" font-family="Liberation Sans" font-size="5" font-weight="normal" fill="#b0b0b0"  >80</text>
<text x="615.3" y="390.8" font-family="Liberation Sans" font-size="5" font-weight="normal" fill="#b0b0b0"  >85</text>
<text x="643.9" y="390.8" font-family="Liberation Sans" font-size="5" font-weight="normal" fill="#b0b0b0"  >90</text>
<text x="672.5" y="390.8" font-family="Liberation Sans" font-size="5" font-weight="normal" fill="#b0b0b0"  >95</text>
<text x="701.1" y="390.8" font-family="Liberation Sans" font-size="5" font-weight="normal" fill="#b0b0b0"  >100</text>
<text x="729.7" y="390.8" font-family="Liberation Sans" font-size="5" font-weight="normal" fill="#b0b0b0"  >105</text>
<text x="758.3" y="390.8" font-family="Liberation Sans" font-size="5" font-weight="normal" fill="#b0b0b0"  >110</text>
<text x="301" y="379.6" font-family="Liberation Sans" font-size="3.8" font-weight="normal" fill="#aaa" textLength="4.0" lengthAdjust="spacingAndGlyphs" >1s</text>
<text x="473" y="379.6" font-family="Liberation Sans" font-size="3.8" font-weight="normal" fill="#aaa" textLength="4.0" lengthAdjust="spacingAndGlyphs" >2s</text>
<text x="644.5" y="379.6" font-family="Liberation Sans" font-size="3.8" font-weight="normal" fill="#aaa" textLength="4.0" lengthAdjust="spacingAndGlyphs" >3s</text>
<circle cx="137.4" cy="401.4" r="1" fill="#1c3f78"/><circle cx="137.4" cy="413.4" r="1" fill="#1c3f78"/>
<path d="M713.6,58.4H716.6" stroke="#bbb" stroke-width="0.8"/><path d="M722.6,56.6L725.4,59.4M725.4,56.6L722.6,59.4" stroke="#ddd" stroke-width="0.9"/>
<path d="M720.4,65.4H724.8M720.4,66.7H724.8M720.4,68H724.8" stroke="#999" stroke-width="0.7"/>
<text x="517" y="68.8" font-family="'Liberation Sans','Noto Sans CJK JP',sans-serif" font-size="6" font-weight="bold" fill="#f2f2f2" textLength="20" lengthAdjust="spacingAndGlyphs">ライブラリ</text>
<text x="543" y="68.8" font-family="'Liberation Sans','Noto Sans CJK JP',sans-serif" font-size="5.6" fill="#666" textLength="22" lengthAdjust="spacingAndGlyphs">プロパティ</text>
<text x="522" y="79.8" font-family="Liberation Sans" font-size="6.8" font-weight="normal" fill="#e8e8e8" textLength="31.0" lengthAdjust="spacingAndGlyphs" >airplane.fla</text>
<path d="M689.6,76L692.3,78.6L695,76" fill="none" stroke="#f0f0f0" stroke-width="1.3"/>
<path d="M705,77.6H709" stroke="#ddd" stroke-width="1"/><circle cx="710.4" cy="77.6" r="1.9" fill="#ddd"/>
<rect x="717.4" y="74.4" width="4.6" height="5.6" fill="none" stroke="#aaa" stroke-width="0.8"/><rect x="719.4" y="76.2" width="4.6" height="5.6" fill="#2b2b2b" stroke="#aaa" stroke-width="0.8"/>
<text x="514.2" y="156.4" font-family="Liberation Sans" font-size="5.6" font-weight="normal" fill="#ccc" textLength="2.4" lengthAdjust="spacingAndGlyphs" >7</text>
<text x="518.4" y="156.4" font-family="'Liberation Sans','Noto Sans CJK JP',sans-serif" font-size="5.6" fill="#cfcfcf" textLength="23" lengthAdjust="spacingAndGlyphs">個のアイテム</text>
<circle cx="599" cy="153" r="1.9" fill="none" stroke="#ddd" stroke-width="1"/><path d="M597.6,154.6L595.4,157" stroke="#ddd" stroke-width="1.2"/>
<text x="517" y="170" font-family="'Liberation Sans','Noto Sans CJK JP',sans-serif" font-size="6" fill="#d8d8d8" textLength="10" lengthAdjust="spacingAndGlyphs">名前</text>
<path d="M531.2,170.4V165M529,167L531.2,164.8L533.4,167" fill="none" stroke="#d8d8d8" stroke-width="0.9"/>
<path d="M624.2,161V175M656.4,161V175M690.6,161V175M725.2,161V175" stroke="#484848" stroke-width="0.7"/>
<text x="627" y="170" font-family="'Liberation Sans','Noto Sans CJK JP',sans-serif" font-size="5.8" fill="#c8c8c8" textLength="21" lengthAdjust="spacingAndGlyphs">リンケージ</text>
<text x="660" y="170" font-family="'Liberation Sans','Noto Sans CJK JP',sans-serif" font-size="5.8" fill="#c8c8c8" textLength="17" lengthAdjust="spacingAndGlyphs">使用回数</text>
<text x="694" y="170" font-family="'Liberation Sans','Noto Sans CJK JP',sans-serif" font-size="6" fill="#c8c8c8" textLength="15.6" lengthAdjust="spacingAndGlyphs">修正日</text>
<g transform="translate(525.2 179.0) scale(1)"><path d="M0.1,4.7L3.9,0.3L5.3,2.5H7.7V7.3H5.2L3.4,8.2Z" fill="#e0e0e0" stroke="#e0e0e0" stroke-width="0.5" stroke-linejoin="round"/><circle cx="3.5" cy="5.5" r="1.15" fill="#222"/><path d="M3.6,2.6L5.4,2.7" stroke="#333" stroke-width="0.5"/></g>
<text x="536.2" y="185.7" font-family="Liberation Sans" font-size="7.2" font-weight="normal" fill="#b4b4b4" textLength="23.8" lengthAdjust="spacingAndGlyphs" >airship.ai</text>
<text x="661" y="185.7" font-family="Liberation Sans" font-size="7" font-weight="normal" fill="#b4b4b4" textLength="3.4" lengthAdjust="spacingAndGlyphs" >0</text>
<text x="694" y="185.7" font-family="Liberation Sans" font-size="6.8" font-weight="normal" fill="#b4b4b4" textLength="27.4" lengthAdjust="spacingAndGlyphs" >2019/12...</text>
<g transform="translate(525.2 195.0) scale(1)"><path d="M0.1,4.7L3.9,0.3L5.3,2.5H7.7V7.3H5.2L3.4,8.2Z" fill="#e6e6e6" stroke="#e6e6e6" stroke-width="0.5" stroke-linejoin="round"/><circle cx="3.5" cy="5.5" r="1.15" fill="#222"/><path d="M3.6,2.6L5.4,2.7" stroke="#333" stroke-width="0.5"/></g>
<text x="536.2" y="201.7" font-family="Liberation Sans" font-size="7.2" font-weight="normal" fill="#dadada" textLength="30.8" lengthAdjust="spacingAndGlyphs" >cloud_01.ai</text>
<text x="661" y="201.7" font-family="Liberation Sans" font-size="7" font-weight="normal" fill="#dadada" textLength="3.4" lengthAdjust="spacingAndGlyphs" >0</text>
<text x="694" y="201.7" font-family="Liberation Sans" font-size="6.8" font-weight="normal" fill="#dadada" textLength="27.4" lengthAdjust="spacingAndGlyphs" >2019/12...</text>
<g transform="translate(525.2 210.60000000000002) scale(1)"><path d="M0.1,4.7L3.9,0.3L5.3,2.5H7.7V7.3H5.2L3.4,8.2Z" fill="#e6e6e6" stroke="#e6e6e6" stroke-width="0.5" stroke-linejoin="round"/><circle cx="3.5" cy="5.5" r="1.15" fill="#222"/><path d="M3.6,2.6L5.4,2.7" stroke="#333" stroke-width="0.5"/></g>
<text x="536.2" y="217.3" font-family="Liberation Sans" font-size="7.2" font-weight="normal" fill="#dadada" textLength="30.8" lengthAdjust="spacingAndGlyphs" >cloud_02.ai</text>
<text x="661" y="217.3" font-family="Liberation Sans" font-size="7" font-weight="normal" fill="#dadada" textLength="3.4" lengthAdjust="spacingAndGlyphs" >0</text>
<text x="694" y="217.3" font-family="Liberation Sans" font-size="6.8" font-weight="normal" fill="#dadada" textLength="27.4" lengthAdjust="spacingAndGlyphs" >2019/12...</text>
<g transform="translate(525.2 226.20000000000002) scale(1)"><path d="M0.1,4.7L3.9,0.3L5.3,2.5H7.7V7.3H5.2L3.4,8.2Z" fill="#e6e6e6" stroke="#e6e6e6" stroke-width="0.5" stroke-linejoin="round"/><circle cx="3.5" cy="5.5" r="1.15" fill="#222"/><path d="M3.6,2.6L5.4,2.7" stroke="#333" stroke-width="0.5"/></g>
<text x="536.2" y="232.9" font-family="Liberation Sans" font-size="7.2" font-weight="normal" fill="#dadada" textLength="30.8" lengthAdjust="spacingAndGlyphs" >cloud_03.ai</text>
<text x="661" y="232.9" font-family="Liberation Sans" font-size="7" font-weight="normal" fill="#dadada" textLength="3.4" lengthAdjust="spacingAndGlyphs" >0</text>
<text x="694" y="232.9" font-family="Liberation Sans" font-size="6.8" font-weight="normal" fill="#dadada" textLength="27.4" lengthAdjust="spacingAndGlyphs" >2019/12...</text>
<g transform="translate(525.2 242.0) scale(1)"><path d="M0.1,4.7L3.9,0.3L5.3,2.5H7.7V7.3H5.2L3.4,8.2Z" fill="#e6e6e6" stroke="#e6e6e6" stroke-width="0.5" stroke-linejoin="round"/><circle cx="3.5" cy="5.5" r="1.15" fill="#222"/><path d="M3.6,2.6L5.4,2.7" stroke="#333" stroke-width="0.5"/></g>
<text x="536.2" y="248.7" font-family="Liberation Sans" font-size="7.2" font-weight="normal" fill="#dadada" textLength="30.8" lengthAdjust="spacingAndGlyphs" >cloud_04.ai</text>
<text x="661" y="248.7" font-family="Liberation Sans" font-size="7" font-weight="normal" fill="#dadada" textLength="3.4" lengthAdjust="spacingAndGlyphs" >0</text>
<text x="694" y="248.7" font-family="Liberation Sans" font-size="6.8" font-weight="normal" fill="#dadada" textLength="27.4" lengthAdjust="spacingAndGlyphs" >2019/12...</text>
<g transform="translate(525.2 257.8) scale(1)"><path d="M0.1,4.7L3.9,0.3L5.3,2.5H7.7V7.3H5.2L3.4,8.2Z" fill="#e6e6e6" stroke="#e6e6e6" stroke-width="0.5" stroke-linejoin="round"/><circle cx="3.5" cy="5.5" r="1.15" fill="#222"/><path d="M3.6,2.6L5.4,2.7" stroke="#333" stroke-width="0.5"/></g>
<text x="536.2" y="264.5" font-family="Liberation Sans" font-size="7.2" font-weight="normal" fill="#dadada" textLength="30.8" lengthAdjust="spacingAndGlyphs" >cloud_05.ai</text>
<text x="661" y="264.5" font-family="Liberation Sans" font-size="7" font-weight="normal" fill="#dadada" textLength="3.4" lengthAdjust="spacingAndGlyphs" >0</text>
<text x="694" y="264.5" font-family="Liberation Sans" font-size="6.8" font-weight="normal" fill="#dadada" textLength="27.4" lengthAdjust="spacingAndGlyphs" >2019/12...</text>
<g transform="translate(525.2 273.6) scale(1)"><path d="M0.1,4.7L3.9,0.3L5.3,2.5H7.7V7.3H5.2L3.4,8.2Z" fill="#e6e6e6" stroke="#e6e6e6" stroke-width="0.5" stroke-linejoin="round"/><circle cx="3.5" cy="5.5" r="1.15" fill="#222"/><path d="M3.6,2.6L5.4,2.7" stroke="#333" stroke-width="0.5"/></g>
<text x="536.2" y="280.3" font-family="Liberation Sans" font-size="7.2" font-weight="normal" fill="#dadada" textLength="15.2" lengthAdjust="spacingAndGlyphs" >sky.ai</text>
<text x="661" y="280.3" font-family="Liberation Sans" font-size="7" font-weight="normal" fill="#dadada" textLength="3.4" lengthAdjust="spacingAndGlyphs" >0</text>
<text x="694" y="280.3" font-family="Liberation Sans" font-size="6.8" font-weight="normal" fill="#dadada" textLength="27.4" lengthAdjust="spacingAndGlyphs" >2019/12...</text>
<g fill="#cfcfcf"><path d="M515.4,356.2H519.4V360.6H517.2L515.4,359Z"/><path d="M523,356.4H525L525.6,357.2H528.2V360.6H523Z"/><circle cx="533.6" cy="358.4" r="2.5"/><path d="M540.2,357H545M541.6,356.2H543.6M540.8,357.8H544.4L544,361H541.2Z" stroke="#8a8a8a" stroke-width="0.5" fill="#8a8a8a"/></g><path d="M533.6,357.2V357.8M533.6,358.4V360" stroke="#222" stroke-width="0.8"/></svg>
</body></html>
